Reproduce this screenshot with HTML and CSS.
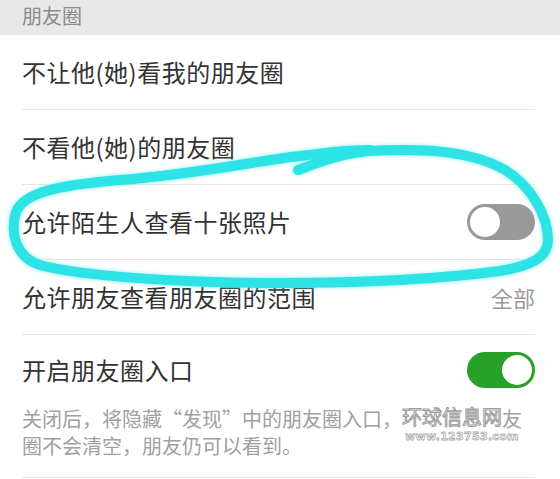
FILE: index.html
```html
<!DOCTYPE html>
<html lang="zh-CN">
<head>
<meta charset="utf-8">
<title>朋友圈设置</title>
<link rel="stylesheet" href="styles.css">
</head>
<body>
<div class="page">
  <div class="section-header">朋友圈</div>
  <div class="list">
    <div class="row"><span class="label">不让他(她)看我的朋友圈</span></div>
    <div class="row"><span class="label">不看他(她)的朋友圈</span></div>
    <div class="row">
      <span class="label">允许陌生人查看十张照片</span>
      <span class="switch"><span class="knob"></span></span>
    </div>
    <div class="row">
      <span class="label">允许朋友查看朋友圈的范围</span>
      <span class="value">全部</span>
    </div>
    <div class="row row-stack">
      <div class="row-main">
        <span class="label">开启朋友圈入口</span>
        <span class="switch on"><span class="knob"></span></span>
      </div>
      <p class="note">关闭后，将隐藏“发现”中的朋友圈入口，<span class="wm">环球信息网<span class="wm-url">www.123753.com</span></span>友<br>圈不会清空，朋友仍可以看到。</p>
    </div>
  </div>
  <svg class="scribble" viewBox="0 0 560 479" width="560" height="479">
    <path d="M 298 170 C 320 162, 340 154, 368 151 C 420 148, 470 150, 505 170 C 530 185, 548 215, 548 240 C 548 258, 530 266, 500 271 C 440 279, 360 283, 280 283 C 180 283, 80 276, 40 265 C 15 257, 10 232, 16 212 C 24 192, 60 185, 120 180 C 200 174, 260 160, 300 156 C 330 152, 350 150, 370 150"/>
  </svg>
</div>
</body>
</html>
```

FILE: styles.css
```css
html, body {
  margin: 0;
  padding: 0;
  background: #ffffff;
}

.page {
  position: relative;
  width: 560px;
  height: 479px;
  overflow: hidden;
  font-family: "Noto Sans CJK SC", "Noto Sans", sans-serif;
  color: #333333;
}

.section-header {
  height: 35px;
  box-sizing: border-box;
  padding: 0 0 5px 22px;
  display: flex;
  align-items: center;
  background: #e8e8e8;
  color: #8c8c8c;
  font-size: 20px;
}

.list {
  padding: 0 25px 0 22px;
}

.row {
  height: 75px;
  box-sizing: border-box;
  display: flex;
  align-items: center;
  justify-content: space-between;
  border-bottom: 1px solid #e6e6e6;
}

.label {
  font-size: 24px;
  letter-spacing: 0.5px;
  line-height: 1.2;
}

.value {
  font-size: 22px;
  color: #9a9a9a;
  line-height: 1.2;
}

.switch {
  width: 68px;
  height: 36px;
  box-sizing: border-box;
  border-radius: 18px;
  background: #999999;
  display: flex;
  align-items: center;
  padding: 0 3px;
}

.switch .knob {
  width: 30px;
  height: 30px;
  border-radius: 50%;
  background: #ffffff;
}

.switch.on {
  background: #27a127;
  justify-content: flex-end;
}

.row-stack {
  height: auto;
  display: block;
  padding-bottom: 18px;
}

.row-main {
  height: 70px;
  display: flex;
  align-items: center;
  justify-content: space-between;
}

.note {
  margin: 0;
  font-size: 20px;
  line-height: 27px;
  color: #a0a0a0;
}

.wm {
  position: relative;
  display: inline-block;
  vertical-align: top;
  margin-top: 1px;
  font-size: 20px;
  line-height: 22px;
  color: rgba(255, 255, 255, 0.9);
  -webkit-text-stroke: 1px #9c9c9c;
}

.wm-url {
  position: absolute;
  left: 3px;
  top: 25px;
  font-family: "DejaVu Sans", sans-serif;
  font-weight: bold;
  font-size: 11px;
  line-height: 11px;
  letter-spacing: 0.3px;
  white-space: nowrap;
  color: rgba(255, 255, 255, 0.9);
  -webkit-text-stroke: 0.8px #aaaaaa;
}

.scribble {
  position: absolute;
  left: 0;
  top: 0;
  pointer-events: none;
  fill: none;
}

.scribble path {
  stroke: #2ee3e6;
  stroke-width: 10;
  stroke-linecap: round;
  stroke-linejoin: round;
  filter: drop-shadow(0 0 2px rgba(90, 235, 240, 0.7));
}
```
